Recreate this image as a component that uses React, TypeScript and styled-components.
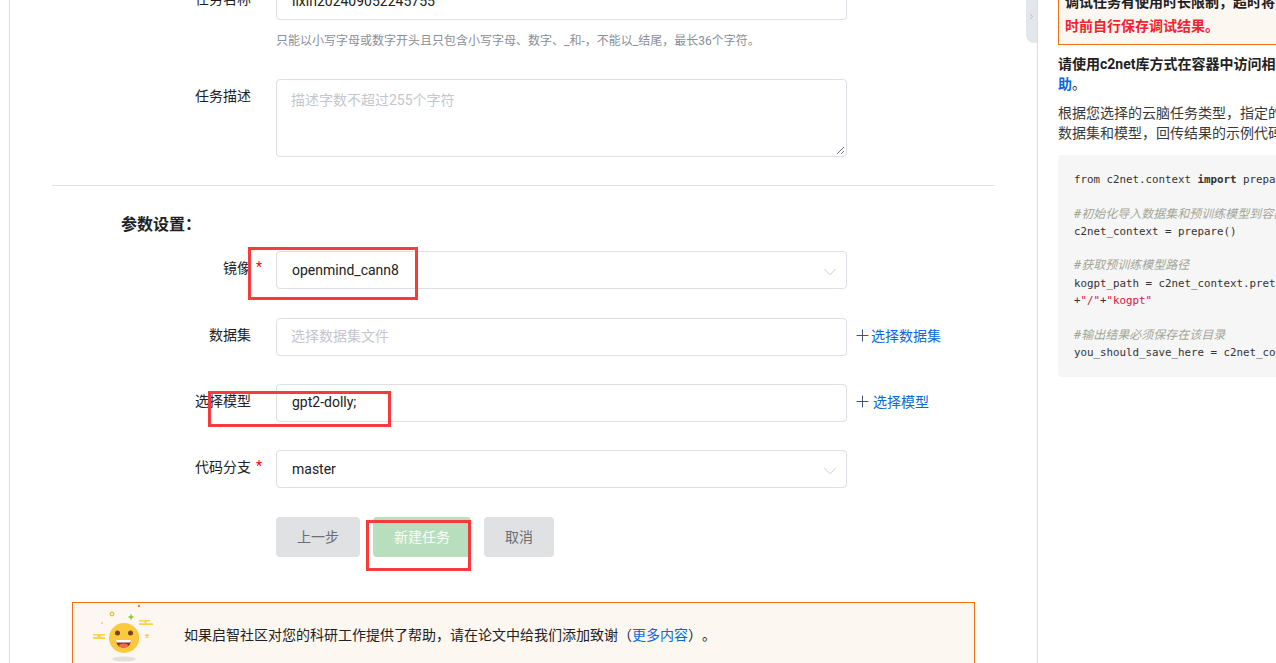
import React from "react";
import styled, {createGlobalStyle} from "styled-components";
import {ChevronDown, ChevronRight, Plus} from "lucide-react";

const GlobalStyle = createGlobalStyle`
  html, body {
    margin: 0;
    padding: 0;
    background: #fff;
    overflow: hidden;
  }
  body {
    font-family: Roboto, "Noto Sans CJK SC", sans-serif;
    font-size: 14px;
    color: #212121;
    text-spacing-trim: space-all;
  }
`;

const Page = styled.div`
  position: relative;
  display: flex;
  width: 1276px;
  height: 663px;
  overflow: hidden;
`;
const Main = styled.main`
  flex: none;
  width: 1029px;
  height: 663px;
  margin-left: 9px;
  box-sizing: border-box;
  border-left: 1px solid #dcdddf;
  border-right: 1px solid #dcdddf;
  overflow: hidden;
`;
const FormBody = styled.div`
  margin: -18px 42px 0;
  display: flex;
  flex-direction: column;
`;
const Row = styled.div<{$gap: number; $top?: number}>`
  display: flex;
  align-items: flex-start;
  margin-top: ${(props) => props.$top || 0}px;
  margin-bottom: ${(props) => props.$gap}px;
`;
const Label = styled.label`
  flex: none;
  width: 199px;
  height: 38px;
  line-height: 34px;
  text-align: right;
  color: #212121;
  white-space: nowrap;
`;
const Star = styled.span`
  flex: none;
  width: 25px;
  height: 38px;
  line-height: 32px;
  padding-left: 5px;
  box-sizing: border-box;
  color: #f00;
`;
const Field = styled.div`
  flex: none;
  width: 571px;
`;
const Control = styled.div<{$height?: number; $line?: number}>`
  position: relative;
  box-sizing: border-box;
  height: ${(props) => props.$height || 38}px;
  padding: 0 15px;
  line-height: ${(props) => props.$line || 34}px;
  background: #fff;
  border: 1px solid #dedee6;
  border-radius: 4px;
  color: #212121;
`;
const Placeholder = styled.span`
  color: #c4c6cc;
  margin-left: -1px;
`;
const AreaPlaceholder = styled(Placeholder)`
  display: block;
  padding-top: 3px;
`;
const Resize = styled.svg`
  position: absolute;
  right: 1px;
  bottom: 1px;
`;
const Arrow = styled(ChevronDown)`
  position: absolute;
  right: 5px;
  top: 9px;
  color: #c8cbd0;
`;
const Hint = styled.div`
  margin-top: 12px;
  font-size: 12px;
  line-height: 18px;
  color: #8a8e99;
  white-space: nowrap;
`;
const Divider = styled.hr`
  width: 943px;
  margin: 0;
  border: 0;
  border-top: 1px solid #e2e3e6;
`;
const SectionTitle = styled.h3`
  margin: 28px 0 15px 69px;
  font-size: 16px;
  line-height: 22px;
  font-weight: 700;
  color: #212121;
`;
const AddLink = styled.a<{$gap: number}>`
  display: flex;
  align-items: center;
  gap: ${(props) => props.$gap}px;
  height: 34px;
  margin-left: 10px;
  color: #0969da;
  white-space: nowrap;
  svg {
    margin: 0 -4px;
    color: #3c4a6b;
  }
`;
const Actions = styled.div`
  display: flex;
  gap: 13px;
  margin-left: 224px;
`;
const Button = styled.button<{$width: number; $primary?: boolean}>`
  width: ${(props) => props.$width}px;
  height: 40px;
  padding: 0 0 3px;
  border: 0;
  border-radius: 4px;
  font: inherit;
  background: ${(props) => (props.$primary ? "#b8dfbd" : "#e0e1e3")};
  color: ${(props) => (props.$primary ? "#f8fcf8" : "#6a6d73")};
`;
const Banner = styled.div`
  display: flex;
  align-items: center;
  box-sizing: border-box;
  width: 903px;
  height: 72px;
  margin: 45px 0 0 20px;
  padding: 0 0 8px 19px;
  background: #fdf7f1;
  border: 1px solid #f37019;
  color: #212121;
  white-space: nowrap;
`;
const BannerText = styled.span`
  margin-left: 28px;
`;
const BannerLink = styled.a`
  color: #0969da;
`;

const Collapse = styled.div`
  flex: none;
  align-self: flex-start;
  margin-left: -12px;
  width: 11px;
  height: 43px;
  display: flex;
  align-items: center;
  justify-content: center;
  padding-bottom: 11px;
  box-sizing: border-box;
  background: #e3e7ec;
  border-bottom-left-radius: 8px;
  color: #b3b9c2;
`;
const Side = styled.aside`
  flex: none;
  width: 218px;
  margin-left: 21px;
  white-space: nowrap;
`;
const Alert = styled.div`
  box-sizing: border-box;
  width: 300px;
  height: 56px;
  margin-top: -11px;
  padding: 0 6px;
  background: #fdf7f1;
  border: 1px solid #f37019;
  font-weight: 700;
  font-size: 14px;
  line-height: 24px;
  color: #212121;
`;
const AlertRed = styled.div`
  color: #f5222d;
`;
const Strong = styled.p`
  margin: 9px 0 0;
  width: 218px;
  font-size: 14px;
  font-weight: 700;
  line-height: 20px;
  color: #212121;
`;
const Blue = styled.span`
  color: #0969da;
`;
const Dim = styled.span`
  font-weight: 400;
`;
const Para = styled.p`
  margin: 9px 0 0;
  font-size: 14px;
  line-height: 20px;
  color: #3a3a3a;
`;
const Code = styled.pre`
  box-sizing: border-box;
  width: 300px;
  height: 222px;
  margin: 12px 0 0;
  padding: 16px 16px;
  background: #f6f6f6;
  border-radius: 4px;
  font-family: "DejaVu Sans Mono", "Noto Sans CJK SC", monospace;
  font-size: 10.8px;
  line-height: 17.3px;
  color: #333;
  overflow: hidden;
`;
const Kw = styled.b`
  font-weight: 700;
`;
const Cm = styled.i`
  font-size: 12px;
  color: #a3a696;
`;
const Str = styled.span`
  color: #dd1144;
`;

const Mark = styled.div<{$x: number; $y: number; $w: number; $h: number}>`
  position: absolute;
  left: ${(props) => props.$x}px;
  top: ${(props) => props.$y}px;
  width: ${(props) => props.$w}px;
  height: ${(props) => props.$h}px;
  box-sizing: border-box;
  border: 3px solid #f83a3a;
`;

const Smiley = () => (
  <svg width="64" height="62" viewBox="0 0 64 62">
    <ellipse cx="32" cy="56" rx="12" ry="2.5" fill="#e2e0dc" />
    <circle cx="32" cy="35" r="15" fill="#fbc93d" />
    <path d="M40 22.500a15 15 0 0 1-5 27.200A15 15 0 0 0 47 35a15 15 0 0 0-7-12.500z" fill="#f3b62e" />
    <circle cx="25.500" cy="30" r="2.500" fill="#7a4120" />
    <circle cx="38.500" cy="30" r="2.500" fill="#7a4120" />
    <path d="M24 37h15c0 5-3.400 7.500-7.500 7.500S24 42 24 37z" fill="#8c2f1c" />
    <path d="M24 37h15l-.4 2.400H24.400z" fill="#fff" />
    <ellipse cx="31.500" cy="42.500" rx="4.500" ry="2" fill="#ef6a50" />
    <path d="M47 17h11v1.500h-3.500v1.800H61V22H47v-1.700h5.500v-1.800H47z" fill="#fbd34d" />
    <path d="M1 31h12v1.500H9v1.500h4v2H1v-2h4v-1.500H1z" fill="#fbd34d" />
    <path d="M36.500 14h5M39 11.500v5" stroke="#85c92d" strokeWidth="1.500" />
    <circle cx="20" cy="11" r="1.800" fill="none" stroke="#f5b93a" strokeWidth="1.300" />
    <circle cx="47" cy="3" r="1.200" fill="#ef7d3a" />
    <circle cx="10" cy="20" r="1" fill="#f5c66a" />
    <path d="M53.500 31.500l3 3M56.500 31.500l-3 3" stroke="#f5b93a" strokeWidth="1.400" />
  </svg>
);

export default function App() {
  return (
    <Page>
      <GlobalStyle />
      <Main>
        <FormBody>
          <Row $gap={0}>
            <Label>任务名称</Label>
            <Star />
            <Field>
              <Control $line={36}>lixin202409052245755</Control>
              <Hint>只能以小写字母或数字开头且只包含小写字母、数字、_和-，不能以_结尾，最长36个字符。</Hint>
            </Field>
          </Row>
          <Row $gap={28} $top={29}>
            <Label>任务描述</Label>
            <Star />
            <Field>
              <Control $height={78}>
                <AreaPlaceholder>描述字数不超过255个字符</AreaPlaceholder>
                <Resize width="9" height="9" viewBox="0 0 9 9">
                  <path d="M1 8l7-7M5 8l3-3" stroke="#777" strokeWidth="1" />
                </Resize>
              </Control>
            </Field>
          </Row>
          <Divider />
          <SectionTitle>参数设置：</SectionTitle>
          <Row $gap={29}>
            <Label>镜像</Label>
            <Star>*</Star>
            <Field>
              <Control $line={36}>
                openmind_cann8
                <Arrow size={22} strokeWidth={1} />
              </Control>
            </Field>
          </Row>
          <Row $gap={28}>
            <Label>数据集</Label>
            <Star />
            <Field>
              <Control>
                <Placeholder>选择数据集文件</Placeholder>
              </Control>
            </Field>
            <AddLink $gap={3}>
              <Plus size={19} strokeWidth={1.2} />
              选择数据集
            </AddLink>
          </Row>
          <Row $gap={28}>
            <Label>选择模型</Label>
            <Star />
            <Field>
              <Control>gpt2-dolly;</Control>
            </Field>
            <AddLink $gap={5}>
              <Plus size={19} strokeWidth={1.2} />
              选择模型
            </AddLink>
          </Row>
          <Row $gap={29}>
            <Label>代码分支</Label>
            <Star>*</Star>
            <Field>
              <Control $line={36}>
                master
                <Arrow size={22} strokeWidth={1} />
              </Control>
            </Field>
          </Row>
          <Actions>
            <Button $width={84}>上一步</Button>
            <Button $width={98} $primary>
              新建任务
            </Button>
            <Button $width={70}>取消</Button>
          </Actions>
          <Banner>
            <Smiley />
            <BannerText>
              如果启智社区对您的科研工作提供了帮助，请在论文中给我们添加致谢（
              <BannerLink>更多内容</BannerLink>）。
            </BannerText>
          </Banner>
        </FormBody>
      </Main>
      <Collapse>
        <ChevronRight size={9} strokeWidth={2.5} />
      </Collapse>
      <Side>
        <Alert>
          调试任务有使用时长限制，超时将会被停止，请在超
          <AlertRed>时前自行保存调试结果。</AlertRed>
        </Alert>
        <Strong>
          请使用c2net库方式在容器中访问相关数据集和模型
          <br />
          <Blue>助</Blue>
          <Dim>。</Dim>
        </Strong>
        <Para>
          根据您选择的云脑任务类型，指定的数据集和模型
          <br />
          数据集和模型，回传结果的示例代码如下
        </Para>
        <Code>
          from c2net.context <Kw>import</Kw> prepare{"\n\n"}
          <Cm>#初始化导入数据集和预训练模型到容器内</Cm>
          {"\n"}c2net_context = prepare(){"\n\n"}
          <Cm>#获取预训练模型路径</Cm>
          {"\n"}kogpt_path = c2net_context.pretrain_path{"\n"}+<Str>"/"</Str>+<Str>"kogpt"</Str>
          {"\n\n"}
          <Cm>#输出结果必须保存在该目录</Cm>
          {"\n"}you_should_save_here = c2net_context.output_path
        </Code>
      </Side>
      <Mark $x={248} $y={247} $w={170} $h={53} />
      <Mark $x={208} $y={391} $w={183} $h={36} />
      <Mark $x={366} $y={520} $w={105} $h={51} />
    </Page>
  );
}
